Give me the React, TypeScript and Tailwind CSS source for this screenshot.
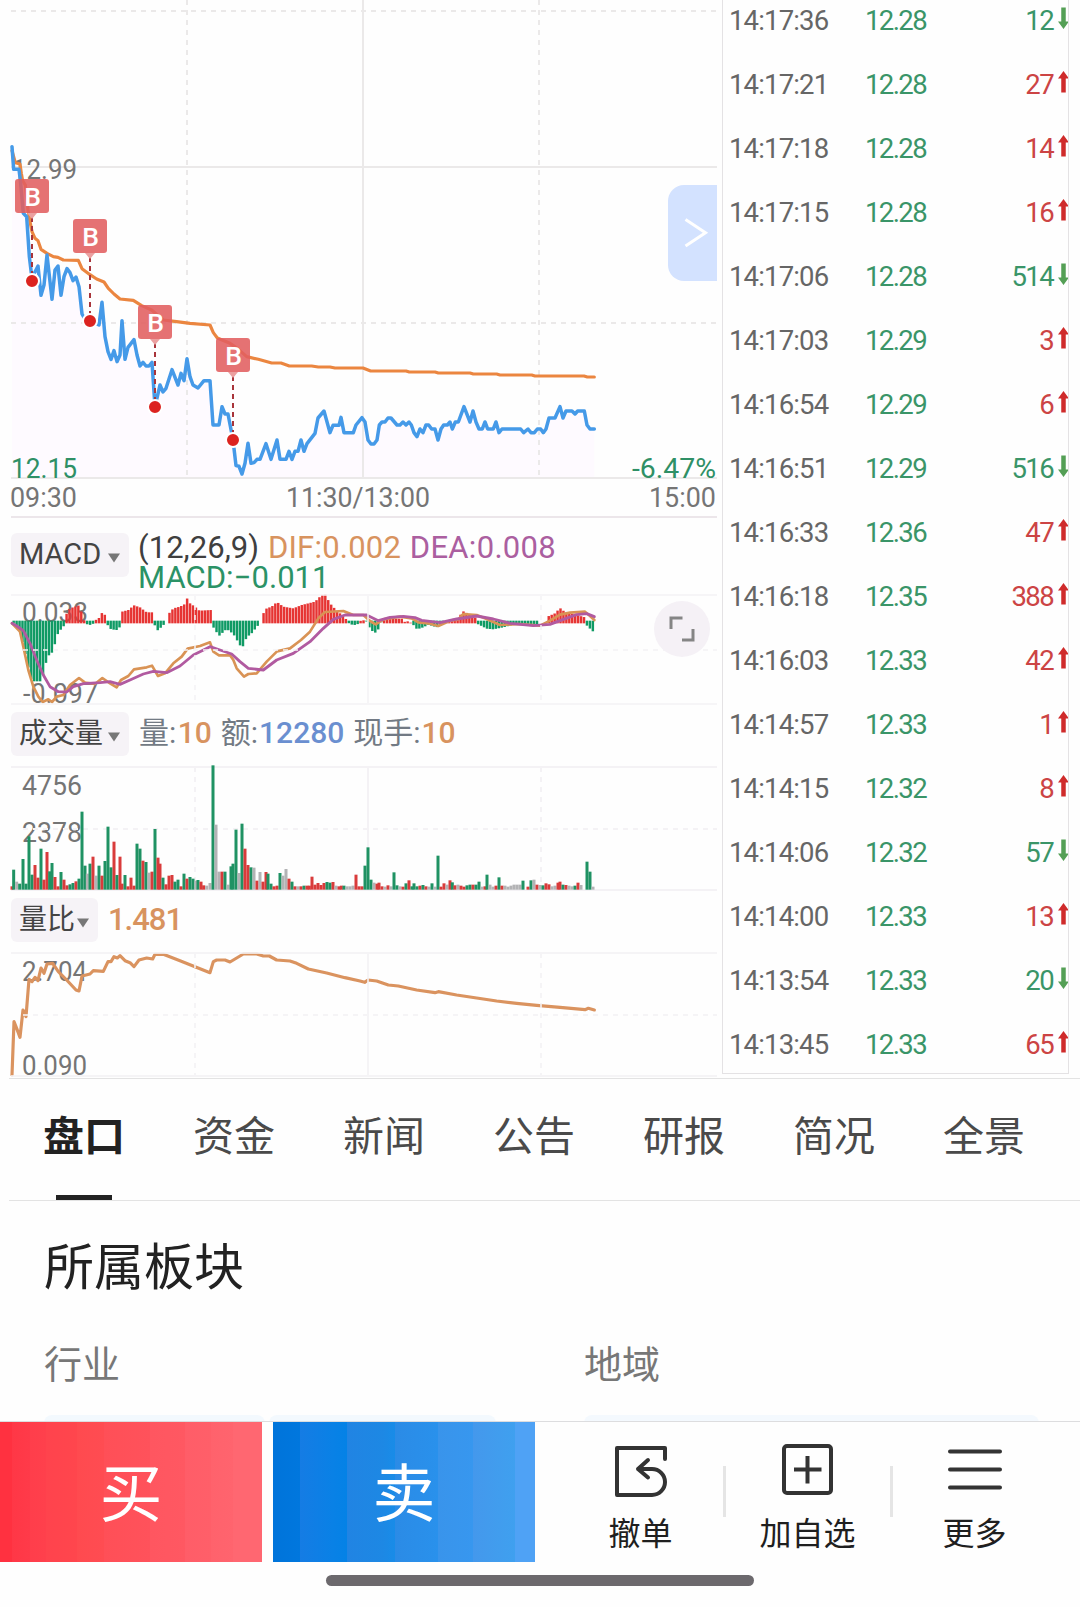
import React from "react";

const SANS = "font-['Roboto','Noto_Sans_CJK_SC',sans-serif]";

type Tick = [string, string, number, "up" | "down"];

const ticks: Array<Tick> = [
  ["14:17:36", "12.28", 12, "down"],
  ["14:17:21", "12.28", 27, "up"],
  ["14:17:18", "12.28", 14, "up"],
  ["14:17:15", "12.28", 16, "up"],
  ["14:17:06", "12.28", 514, "down"],
  ["14:17:03", "12.29", 3, "up"],
  ["14:16:54", "12.29", 6, "up"],
  ["14:16:51", "12.29", 516, "down"],
  ["14:16:33", "12.36", 47, "up"],
  ["14:16:18", "12.35", 388, "up"],
  ["14:16:03", "12.33", 42, "up"],
  ["14:14:57", "12.33", 1, "up"],
  ["14:14:15", "12.32", 8, "up"],
  ["14:14:06", "12.32", 57, "down"],
  ["14:14:00", "12.33", 13, "up"],
  ["14:13:54", "12.33", 20, "down"],
  ["14:13:45", "12.33", 65, "up"],
];

const tabs = ["盘口", "资金", "新闻", "公告", "研报", "简况", "全景"];

// series are stored on a grid three times finer than the screen
const pricePoints =
  "36,50 41,118 57,118 62,160 70,250 80,260 88,380 94,430 96,453 103,430 114,408 123,496 132,465 141,375 150,455 156,508 165,420 174,408 183,496 192,440 201,416 210,428 219,452 228,441 237,470 246,552 258,573 270,573 297,585 306,517 315,620 324,665 333,688 342,662 351,695 360,675 366,572 375,688 384,652 402,629 411,675 420,708 429,697 438,708 447,708 456,697 465,830 480,765 489,786 498,775 516,719 534,765 543,730 552,752 561,686 570,740 579,765 594,774 612,752 630,752 639,885 657,885 666,830 675,852 684,852 699,930 708,1007 717,1009 726,1032 735,1000 744,940 753,1000 762,998 771,988 780,988 798,941 813,988 831,930 840,988 858,988 867,964 876,988 885,964 894,964 903,930 912,964 921,941 945,910 954,864 972,843 990,908 999,886 1017,886 1023,862 1032,908 1060,908 1068,885 1086,863 1095,876 1104,930 1113,942 1122,942 1131,930 1138,885 1146,876 1155,876 1164,864 1173,864 1191,885 1200,885 1209,876 1218,885 1227,876 1234,885 1242,908 1251,920 1260,897 1269,908 1278,885 1286,885 1295,897 1305,897 1314,930 1323,897 1331,885 1342,885 1350,876 1357,897 1366,876 1375,876 1392,830 1410,876 1419,843 1428,876 1437,897 1447,897 1455,876 1463,897 1480,897 1488,876 1497,908 1506,897 1562,897 1571,908 1584,897 1593,908 1603,908 1612,897 1622,897 1630,908 1638,897 1647,864 1665,864 1680,830 1689,864 1698,843 1716,843 1725,852 1733,843 1753,843 1761,885 1770,897 1783,897";

const avgPoints =
  "36,62 46,98 60,102 64,130 68,152 76,165 84,240 90,275 96,305 105,325 114,332 123,358 141,370 160,380 174,382 190,390 235,391 246,416 270,434 290,447 312,456 325,475 342,492 360,507 400,511 425,527 455,540 490,570 530,575 570,580 630,585 640,608 652,624 690,640 712,655 740,680 775,688 815,699 843,699 868,708 935,708 955,711 990,711 1005,714 1089,714 1112,723 1218,723 1228,726 1305,726 1315,729 1410,729 1420,732 1490,732 1500,735 1595,735 1605,738 1752,738 1762,741 1783,741";

const difPoints =
  "36,370 60,395 70,440 85,510 100,560 115,590 128,606 145,598 156,606 170,590 190,585 210,555 237,534 255,548 285,552 307,534 330,550 350,562 363,540 385,528 402,508 440,502 456,497 474,528 495,520 520,490 545,470 563,446 600,438 630,427 640,455 657,466 690,466 700,480 710,505 732,530 745,522 770,520 800,485 831,454 870,445 903,420 930,395 955,355 975,336 1030,333 1060,345 1090,345 1110,363 1127,373 1150,358 1200,350 1235,355 1255,367 1285,370 1315,378 1350,362 1375,358 1390,342 1430,345 1460,357 1500,375 1560,372 1620,377 1650,362 1680,344 1710,338 1755,335 1770,348 1783,360";

const deaPoints =
  "36,370 50,378 70,392 90,430 110,480 130,525 150,560 175,575 200,576 220,560 250,551 300,548 330,545 360,553 390,540 430,522 460,514 500,518 540,498 580,465 630,440 660,450 695,462 720,485 745,505 790,510 830,480 880,460 930,425 970,385 1000,358 1035,345 1075,345 1100,345 1135,362 1170,352 1210,349 1245,353 1265,361 1320,368 1370,357 1430,348 1480,357 1530,370 1600,377 1650,373 1690,358 1730,344 1760,341 1783,350";

const ratioPoints =
  "36,945 42,785 50,805 60,832 69,750 78,770 87,658 96,665 105,652 114,662 123,624 132,640 141,612 158,610 175,635 200,660 228,690 237,693 246,648 270,642 280,632 310,634 324,605 333,605 342,590 352,594 360,587 375,602 390,608 402,620 417,600 440,594 458,597 465,583 490,583 540,602 585,620 630,638 640,605 650,600 675,600 690,606 710,594 730,582 770,582 790,588 808,588 830,600 870,603 890,610 925,627 980,639 1035,653 1080,663 1094,667 1104,660 1130,663 1165,675 1195,678 1250,690 1305,698 1315,695 1370,705 1430,714 1490,723 1550,730 1610,736 1680,742 1755,749 1765,745 1783,750";

// [x, height], positive is drawn above the zero line
const macdShape: Array<[number, number]> = [
  [40, -6], [50, -14], [60, -34], [70, -75], [80, -115], [90, -165], [97, -182],
  [125, -182], [132, -150], [141, -115], [150, -98], [159, -95], [168, -55],
  [177, -30], [186, -25], [195, -10], [196, 25], [201, 30], [210, 45], [237, 54],
  [246, 30], [252, 10], [257, 4], [258, -10], [272, -13], [282, -8], [284, 8],
  [300, 18], [307, 34], [315, 25], [321, 8], [322, -12], [333, -26], [350, -28],
  [361, -18], [362, 34], [385, 40], [402, 54], [420, 48], [440, 33], [461, 33],
  [462, -10], [474, -30], [485, -18], [496, -8], [498, 0], [501, 0], [502, 24],
  [520, 45], [540, 50], [555, 58], [561, 75], [570, 60], [585, 50], [598, 38],
  [634, 40], [635, -12], [657, -46], [680, -25], [700, -40], [726, -84],
  [740, -50], [755, -38], [776, -12], [778, 0], [784, 0], [785, 22], [800, 45],
  [815, 50], [831, 64], [850, 50], [880, 45], [905, 55], [945, 65], [965, 85],
  [976, 86], [990, 60], [1010, 38], [1030, 22], [1042, 8], [1043, -6],
  [1060, -14], [1074, -10], [1078, 0], [1082, 8], [1098, 10], [1100, -8],
  [1115, -30], [1130, -38], [1142, -8], [1148, 4], [1156, 14], [1210, 14],
  [1216, 0], [1222, 6], [1230, 6], [1236, -8], [1251, -26], [1270, -20],
  [1285, -12], [1310, -20], [1332, -6], [1345, 4], [1370, 12], [1390, 36],
  [1410, 26], [1432, 14], [1433, -10], [1460, -24], [1480, -26], [1510, -20],
  [1540, -12], [1612, -10], [1620, 0], [1638, 0], [1642, 20], [1665, 30],
  [1680, 46], [1700, 30], [1720, 28], [1755, 18], [1756, -10], [1770, -24],
  [1783, -36],
];

const volumeBars =
  "36,380r 41,330g 50,366x 59,372g 69,298g 78,372g 87,230g 96,345g 105,316r 114,354r 123,267g 132,360r 141,277r 149,335g 156,310g 165,352r 174,380r 183,337g 192,360r 201,377r 210,374g 219,370g 228,365r 237,357g 246,156g 255,318g 262,342x 270,312g 279,291r 288,348x 297,318g 306,348r 315,304g 324,201g 333,323g 342,246r 351,346g 360,291r 366,372r 375,346g 384,380r 393,354r 402,378r 411,252g 420,267g 429,303r 438,307g 447,339x 456,336r 465,208g 474,294r 480,312r 489,354g 498,374r 507,348r 516,346r 525,366g 534,360g 543,380r 552,342g 561,357r 570,352g 579,357g 588,363x 594,361g 603,366r 611,377r 620,378x 630,370x 639,17g 648,195x 657,336x 666,336r 675,336g 684,375x 693,320g 699,312g 708,210g 717,340x 726,192g 735,267r 744,316r 753,323g 762,324x 771,363r 780,337x 789,366r 798,337r 804,342g 813,372g 822,380r 831,378r 840,340g 849,348x 858,328x 867,357r 876,366g 885,380r 894,380x 903,380r 912,378g 921,378r 928,378r 936,351r 945,375r 954,370r 963,376r 972,370r 981,367g 990,369g 999,367r 1008,378x 1017,380r 1024,378r 1032,378g 1041,380x 1050,380x 1059,378x 1068,345r 1077,380r 1086,380r 1095,318g 1104,263g 1113,360g 1122,369x 1131,372r 1137,369r 1146,380r 1155,381x 1164,377r 1173,380x 1182,338g 1191,377g 1200,380x 1209,381r 1218,371g 1227,362r 1236,380g 1242,371g 1251,380g 1260,378r 1269,376g 1278,380r 1287,381x 1296,371g 1305,381x 1314,288g 1323,381r 1332,371r 1341,375x 1350,362r 1357,368g 1365,377r 1374,375x 1383,378r 1392,381r 1401,377g 1410,375g 1419,375r 1428,375g 1437,366g 1446,381x 1455,380r 1461,345g 1470,375x 1479,381x 1488,378r 1497,353g 1506,378r 1515,378x 1524,381x 1533,378x 1542,375x 1551,375x 1560,375x 1569,363g 1584,381r 1593,362g 1602,360x 1611,375r 1620,376x 1629,377g 1638,371r 1647,374r 1656,380x 1665,378x 1674,369r 1680,366r 1689,375g 1698,376r 1707,378x 1716,380x 1725,378g 1734,369r 1743,376x 1761,306g 1770,336g 1779,381x";

const barColors: Record<string, string> = {
  r: "#d93b3b",
  g: "#1f9263",
  x: "#b3b3b5",
};

const marks = [
  { x: 32, top: 179, dot: 281 },
  { x: 90, top: 219, dot: 321 },
  { x: 155, top: 305, dot: 407 },
  { x: 233, top: 338, dot: 440 },
];

const macdAt = (x: number) => {
  const i = macdShape.findIndex(([px]) => px >= x);
  if (i <= 0) return macdShape[i === 0 ? 0 : macdShape.length - 1][1];
  const [x0, v0] = macdShape[i - 1];
  const [x1, v1] = macdShape[i];
  return v0 + ((v1 - v0) * (x - x0)) / (x1 - x0);
};

function Label({ x, y, w, size = 27, fill = "#757575", children }: any) {
  return (
    <text
      className={SANS}
      x={x}
      y={y}
      fill={fill}
      fontSize={size}
      textLength={w}
      lengthAdjust="spacingAndGlyphs"
    >
      {children}
    </text>
  );
}

function Line({ points, color, width = 9.5 }: any) {
  return (
    <polyline
      points={points}
      fill="none"
      stroke={color}
      strokeWidth={width}
      strokeLinejoin="round"
      strokeLinecap="round"
    />
  );
}

// frame of the three lower charts
function Grid({ top, middle, bottom }: any) {
  return (
    <g stroke="#f4f2f5" strokeWidth={2}>
      <path d={`M11 ${top}H717M11 ${bottom}H717M368 ${top}V${bottom}`} />
      <path
        d={`M23 ${middle}H717M195 ${top}V${bottom}M541 ${top}V${bottom}`}
        strokeDasharray="5 5"
      />
    </g>
  );
}

function PriceChart() {
  return (
    <svg className="block h-[518px] w-[722px]" viewBox="0 0 722 518">
      <g transform="translate(0 130) scale(0.33333)">
        <polygon points={`36,1043 ${pricePoints} 1783,1043`} fill="#fefaff" />
      </g>
      <g stroke="#ebe9e9" strokeWidth={2} fill="none">
        <path d="M11 167H717M11 478H717M363 0V478" />
        <path
          d="M11 11H717M11 323H717M187 0V478M539 0V478"
          strokeDasharray="5 5"
        />
        <path d="M11 517H717" stroke="#ece6ea" />
      </g>
      <Label x={12} y={178.5} w={65}>12.99</Label>
      <g transform="translate(0 130) scale(0.33333)">
        <Line points={avgPoints} color="#eb8640" />
        <Line points={pricePoints} color="#459ae8" width={10.5} />
      </g>
      {marks.map((mark) => (
        <g key={mark.x}>
          <path
            d={`M${mark.x} ${mark.top + 38}V${mark.dot - 5}`}
            stroke="#a8343a"
            strokeWidth={2}
            strokeDasharray="5 4"
          />
          <rect
            x={mark.x - 17}
            y={mark.top}
            width={34}
            height={34}
            rx={3}
            fill="#e15f60"
            fillOpacity={0.88}
          />
          <path
            d={`M${mark.x - 5} ${mark.top + 34}h10l-5 6z`}
            fill="#eba0a0"
          />
          <circle
            cx={mark.x}
            cy={mark.dot}
            r={7}
            fill="#dc2320"
            stroke="#fff"
            strokeWidth={2}
          />
          <text
            className={`${SANS} font-medium`}
            x={mark.x + 0.5}
            y={mark.top + 27}
            textAnchor="middle"
            fontSize={26.5}
            fill="#fff"
          >
            B
          </text>
        </g>
      ))}
      <Label x={11} y={478} w={66} fill="#2f9066">12.15</Label>
      <Label x={632} y={478} w={84} fill="#2f9066">-6.47%</Label>
      <Label x={10} y={507} w={67}>09:30</Label>
      <Label x={286} y={507} w={144}>11:30/13:00</Label>
      <Label x={649} y={507} w={67}>15:00</Label>
      <path
        d="M717 185H684a16 16 0 0 0 -16 16V265a16 16 0 0 0 16 16H717z"
        fill="#d3e2ff"
      />
      <path
        d="M685.500 219.500L705.500 232.700L685.500 246"
        fill="none"
        stroke="#fff"
        strokeWidth={3}
      />
    </svg>
  );
}

function MacdChart() {
  const bars = Array.from({ length: 198 }, (_, i) => 41 + i * 8.82);
  return (
    <svg className="block h-[111px] w-[722px]" viewBox="0 594 722 111">
      <Label x={22} y={622} w={66}>0.033</Label>
      <Label x={23} y={703} w={75}>-0.097</Label>
      <g transform="translate(0 500) scale(0.33333)">
        {bars.map((x) => {
          const v = macdAt(x);
          if (Math.abs(v) < 2) return null;
          return (
            <rect
              key={x}
              x={x - 3.7}
              y={v > 0 ? 370 - v : 362}
              width={7.4}
              height={Math.abs(v)}
              fill={v > 0 ? "#e63433" : "#0f9a64"}
            />
          );
        })}
        <Line points={difPoints} color="#d99355" width={8} />
        <Line points={deaPoints} color="#b15aa0" width={8.5} />
      </g>
      <g opacity={0.75}>
        <Grid top={595} middle={650} bottom={704} />
      </g>
      <circle cx={682} cy={629} r={28} fill="#f5f1f6" />
      <path
        d="M671 629V618H682.500M693 629V640H682"
        fill="none"
        stroke="#858585"
        strokeWidth={3}
      />
    </svg>
  );
}

function VolumeChart() {
  return (
    <svg className="block h-[126px] w-[722px]" viewBox="0 765 722 126">
      <Label x={22} y={795} w={60}>4756</Label>
      <Label x={22} y={842} w={60}>2378</Label>
      <Grid top={767} middle={829} bottom={890} />
      <g transform="translate(0 760) scale(0.33333)">
        {volumeBars.split(" ").map((bar) => {
          const [x, rest] = bar.split(",");
          const y = parseInt(rest);
          return (
            <rect
              key={x}
              x={Number(x) - 4.5}
              y={y - 1}
              width={9}
              height={390 - y}
              fill={barColors[rest.slice(-1)]}
            />
          );
        })}
      </g>
    </svg>
  );
}

function RatioChart() {
  return (
    <svg className="block h-[127px] w-[722px]" viewBox="0 951 722 127">
      <Label x={22} y={981} w={65}>2.704</Label>
      <Label x={22} y={1075} w={65}>0.090</Label>
      <g transform="translate(0 760) scale(0.33333)">
        <Line points={ratioPoints} color="#da935f" />
      </g>
      <g opacity={0.8}>
        <Grid top={953} middle={1015} bottom={1076} />
      </g>
    </svg>
  );
}

function IndicatorBtn({ children, className }: any) {
  return (
    <button
      className={`flex h-11 shrink-0 items-center justify-between rounded-md bg-[#f6f3f7] pr-[9px] pl-2 text-[#444] ${className}`}
    >
      {children}
      <svg className="mt-1.5 h-2.5 w-3" viewBox="0 0 12 10">
        <path d="M0 0.500H12L6 9.500z" fill="#777" />
      </svg>
    </button>
  );
}

function Charts() {
  return (
    <div className="w-[722px] shrink-0">
      <PriceChart />
      <div className="flex h-[76px] pl-[11px]">
        <IndicatorBtn className="mt-[15px] w-[118px] text-[29px]">
          MACD
        </IndicatorBtn>
        <p className="mt-[15px] ml-[9px] text-[31px] leading-[29.500px] tracking-[0.050px] whitespace-nowrap text-[#2b9266] [word-spacing:1px]">
          <span className="text-[#3f3f3f]">(12,26,9)</span>{" "}
          <span className="tracking-[0.200px] text-[#d8935f]">DIF:0.002</span>{" "}
          <span className="tracking-[0.300px] text-[#ab5fa0]">DEA:0.008</span>
          <br />
          MACD:−0.011
        </p>
      </div>
      <MacdChart />
      <div className="flex h-[60px] pt-[7px] pl-[11px]">
        <IndicatorBtn className="w-[118px] text-[28px]">成交量</IndicatorBtn>
        <p className="ml-2.5 text-[30px] leading-[42px] whitespace-nowrap text-[#727a84] [word-spacing:1.500px]">
          量: <span className="-ml-[7.500px] font-medium text-[#d8935f]">10</span>{" "}
          额:
          <span className="ml-px font-medium text-[#6a8fd0]">12280</span> 现手:
          <span className="ml-px font-medium text-[#d8935f]">10</span>
        </p>
      </div>
      <VolumeChart />
      <div className="flex h-[60px] pt-[7px] pl-[11px]">
        <IndicatorBtn className="w-[87px] text-[28px]">量比</IndicatorBtn>
        <p className="ml-2.5 text-[31px] leading-[43px] font-medium tracking-[-1px] text-[#d8935f]">
          1.481
        </p>
      </div>
      <RatioChart />
    </div>
  );
}

function TickRow({ tick }: { tick: Tick }) {
  const [time, price, volume, side] = tick;
  return (
    <div className="flex h-16 items-center pl-1.5 text-[27.500px]">
      <span className="w-[136px] tracking-[-0.850px] text-[#666]">{time}</span>
      <span className="tracking-[-1.600px] text-[#3a9568]">{price}</span>
      <span
        className={`ml-auto tracking-[-1.600px] ${side === "up" ? "text-[#cc4444]" : "text-[#3a9568]"}`}
      >
        {volume}
      </span>
      <svg
        className={`-mr-px mb-1.5 ml-[5px] h-[22px] w-[11px] ${
          side === "up" ? "text-[#cf2b2b]" : "rotate-180 text-[#549f55]"
        }`}
        viewBox="0 0 11 22"
        fill="currentColor"
      >
        <path d="M5.500 0L11 7.500H7.750V21.500H3.250V7.500H0z" />
      </svg>
    </div>
  );
}

function Tabs() {
  return (
    <div className="ml-[9px] flex h-[123px] border-t border-b border-[#e3e3e3]">
      {tabs.map((tab, i) => (
        <div
          key={tab}
          className={`flex w-[150px] flex-col items-center text-[41px] leading-[116px] ${
            i === 0 ? "font-bold text-[#222]" : "text-[#4a4a4a]"
          }`}
        >
          <span className="h-[116px]">{tab}</span>
          {i === 0 && <div className="h-[5px] w-14 bg-[#222]" />}
        </div>
      ))}
    </div>
  );
}

function Sector() {
  return (
    <div className="h-[220px] overflow-hidden pl-11 text-[#777]">
      <h2 className="mt-[30px] text-[50px] leading-[74px] text-[#222]">
        所属板块
      </h2>
      <div className="mt-8 flex text-[38px] leading-[56px]">
        <div className="w-[540px]">行业</div>
        <div>地域</div>
      </div>
      <div className="mt-[22px] flex">
        <div className="h-10 w-[221px] rounded-lg bg-[#f3f9fe]" />
        <div className="ml-1 h-10 w-[227px] rounded-lg bg-[#f3f9fe]" />
        <div className="ml-[88px] h-10 w-[455px] rounded-lg bg-[#f4f9fe]" />
      </div>
    </div>
  );
}

function BottomBtn({ text, children }: any) {
  return (
    <button className="flex w-[167px] flex-col items-center pt-[19px] text-[32px] leading-[44px] text-[#1f1f1f]">
      <svg
        className="mb-[13px] h-[58px] w-[58px]"
        viewBox="0 0 58 58"
        fill="none"
        stroke="#333"
        strokeWidth={4}
        strokeLinejoin="round"
      >
        {children}
      </svg>
      {text}
    </button>
  );
}

function BottomBar() {
  return (
    <div className="flex h-[141px] border-t border-[#dddddf]">
      <button className="w-[262px] bg-[linear-gradient(90deg,#ff3140_12px,#ff3746_12px,#ff3a49_30px,#ff3e4b_30px,#ff404c_46px,#ff434d_46px,#ff464d_77px,#ff4a4f_77px,#ff4c52_104px,#ff4f57_104px,#ff525b_150px,#ff5660_150px,#ff5862_185px,#ff5d68_185px,#ff5f69_211px,#ff626c_211px,#ff646e_233px,#ff6771_233px)] pt-1.5 text-[63px] text-white">
        买
      </button>
      <button className="ml-[11px] w-[262px] bg-[linear-gradient(90deg,#0074da_0px,#0077de_27px,#157ce4_27px,#0981e6_60px,#0482e6_74px,#2184e3_74px,#1d88e4_110px,#188ce8_122px,#2b8be6_122px,#2991ec_165px,#3994eb_165px,#3797ef_200px,#4498ec_200px,#3fa0ef_242px,#4fa2f5_242px)] pt-1.5 text-[63px] text-white">
        卖
      </button>
      <div className="flex pl-[22px]">
        <BottomBtn text="撤单">
          <path
            d="M53 18V7H5V54H40a13 13 0 0 0 0 -26H26M36 19L26 28L36 36.500"
            strokeLinecap="round"
          />
        </BottomBtn>
        <div className="-mx-[1.500px] mt-11 h-[51px] w-[3px] bg-[#e5e5e5]" />
        <BottomBtn text="加自选">
          <rect x={5} y={5} width={47} height={47} rx={3} />
          <path d="M28.500 15V42.500M15 28.500H42.500" />
        </BottomBtn>
        <div className="-mx-[1.500px] mt-11 h-[51px] w-[3px] bg-[#e5e5e5]" />
        <BottomBtn text="更多">
          <path d="M4 10.500H54M4 28.500H54M4 46.500H54" strokeLinecap="round" />
        </BottomBtn>
      </div>
    </div>
  );
}

export default function App() {
  return (
    <div className={`h-[1607px] w-[1080px] overflow-hidden bg-[#fefefe] ${SANS}`}>
      <div className="flex h-[1078px]">
        <Charts />
        <div className="h-[1074px] w-[347px] overflow-hidden border-r border-b border-l border-[#e4e2e4]">
          <div className="-mt-[11px]">
            {ticks.map((tick) => (
              <TickRow key={tick[0]} tick={tick} />
            ))}
          </div>
        </div>
      </div>
      <Tabs />
      <Sector />
      <BottomBar />
      <div className="mx-auto mt-[13px] h-[11px] w-[428px] rounded-full bg-[#6c696d]" />
    </div>
  );
}
